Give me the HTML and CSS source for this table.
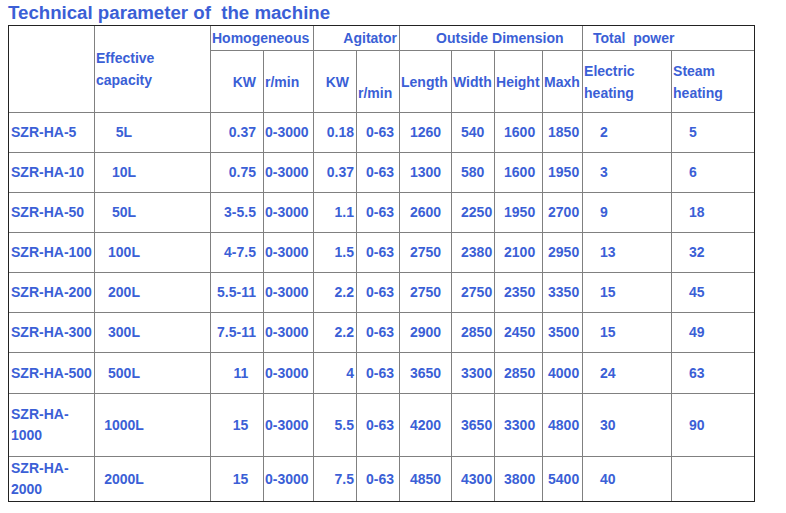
FILE: index.html
```html
<!DOCTYPE html>
<html>
<head>
<meta charset="utf-8">
<title>Technical parameter of the machine</title>
<link rel="stylesheet" href="styles.css">
</head>
<body>
<div class="title">Technical parameter of&nbsp; the machine</div>
<table class="spec">
  <colgroup>
    <col class="w1"><col class="w2"><col class="w3"><col class="w4"><col class="w5"><col class="w6">
    <col class="w7"><col class="w8"><col class="w9"><col class="w10"><col class="w11"><col class="w12">
  </colgroup>
  <tr class="h1">
    <td rowspan="2"></td>
    <td rowspan="2" class="hl">Effective capacity</td>
    <td colspan="2" class="hl">Homogeneous</td>
    <td colspan="2" class="hr">Agitator</td>
    <td colspan="4" class="hod">Outside Dimension</td>
    <td colspan="2" class="htp last">Total&nbsp; power</td>
  </tr>
  <tr class="h2">
    <td class="hkw">KW</td>
    <td class="hl">r/min</td>
    <td class="hkw">KW</td>
    <td class="hl"><br>r/min</td>
    <td class="hl">Length</td>
    <td class="hl">Width</td>
    <td class="hl">Height</td>
    <td class="hl">Maxh</td>
    <td class="hl">Electric heating</td>
    <td class="hl last">Steam heating</td>
  </tr>
  <tr class="r40"><td class="c1">SZR-HA-5</td><td class="c2">5L</td><td class="c3">0.37</td><td class="c4">0-3000</td><td class="c5">0.18</td><td class="c6">0-63</td><td class="c7">1260</td><td class="c8">540</td><td class="c9">1600</td><td class="c10">1850</td><td class="c11">2</td><td class="c12 last">5</td></tr>
  <tr class="r40"><td class="c1">SZR-HA-10</td><td class="c2">10L</td><td class="c3">0.75</td><td class="c4">0-3000</td><td class="c5">0.37</td><td class="c6">0-63</td><td class="c7">1300</td><td class="c8">580</td><td class="c9">1600</td><td class="c10">1950</td><td class="c11">3</td><td class="c12 last">6</td></tr>
  <tr class="r40"><td class="c1">SZR-HA-50</td><td class="c2">50L</td><td class="c3">3-5.5</td><td class="c4">0-3000</td><td class="c5">1.1</td><td class="c6">0-63</td><td class="c7">2600</td><td class="c8">2250</td><td class="c9">1950</td><td class="c10">2700</td><td class="c11">9</td><td class="c12 last">18</td></tr>
  <tr class="r40"><td class="c1">SZR-HA-100</td><td class="c2">100L</td><td class="c3">4-7.5</td><td class="c4">0-3000</td><td class="c5">1.5</td><td class="c6">0-63</td><td class="c7">2750</td><td class="c8">2380</td><td class="c9">2100</td><td class="c10">2950</td><td class="c11">13</td><td class="c12 last">32</td></tr>
  <tr class="r40"><td class="c1">SZR-HA-200</td><td class="c2">200L</td><td class="c3">5.5-11</td><td class="c4">0-3000</td><td class="c5">2.2</td><td class="c6">0-63</td><td class="c7">2750</td><td class="c8">2750</td><td class="c9">2350</td><td class="c10">3350</td><td class="c11">15</td><td class="c12 last">45</td></tr>
  <tr class="r40"><td class="c1">SZR-HA-300</td><td class="c2">300L</td><td class="c3">7.5-11</td><td class="c4">0-3000</td><td class="c5">2.2</td><td class="c6">0-63</td><td class="c7">2900</td><td class="c8">2850</td><td class="c9">2450</td><td class="c10">3500</td><td class="c11">15</td><td class="c12 last">49</td></tr>
  <tr class="r41"><td class="c1">SZR-HA-500</td><td class="c2">500L</td><td class="c3">11&nbsp;&nbsp;</td><td class="c4">0-3000</td><td class="c5">4</td><td class="c6">0-63</td><td class="c7">3650</td><td class="c8">3300</td><td class="c9">2850</td><td class="c10">4000</td><td class="c11">24</td><td class="c12 last">63</td></tr>
  <tr class="r63"><td class="c1">SZR-HA-1000</td><td class="c2">1000L</td><td class="c3">15&nbsp;&nbsp;</td><td class="c4">0-3000</td><td class="c5">5.5</td><td class="c6">0-63</td><td class="c7">4200</td><td class="c8">3650</td><td class="c9">3300</td><td class="c10">4800</td><td class="c11">30</td><td class="c12 last">90</td></tr>
  <tr class="r44 bottom"><td class="c1">SZR-HA-2000</td><td class="c2">2000L</td><td class="c3">15&nbsp;&nbsp;</td><td class="c4">0-3000</td><td class="c5">7.5</td><td class="c6">0-63</td><td class="c7">4850</td><td class="c8">4300</td><td class="c9">3800</td><td class="c10">5400</td><td class="c11">40</td><td class="c12 last"></td></tr>
</table>
</body>
</html>
```
FILE: styles.css
```css
html, body {
  margin: 0;
  padding: 0;
  background: #ffffff;
}
body {
  padding: 3px 8px 0 8px;
  font-family: "Liberation Sans", Arial, sans-serif;
  color: #3b5fd6;
}
.title {
  font-size: 18.67px;
  font-weight: bold;
  line-height: 20px;
  height: 22px;
  white-space: nowrap;
}
.spec {
  border-collapse: separate;
  border-spacing: 0;
  border: 1px solid #222222;
  table-layout: fixed;
  width: 747px;
  font-size: 14px;
  font-weight: bold;
}
.w1 { width: 86px; }
.w2 { width: 116px; }
.w3 { width: 53px; }
.w4 { width: 50px; }
.w5 { width: 43px; }
.w6 { width: 43px; }
.w7 { width: 52px; }
.w8 { width: 43px; }
.w9 { width: 48px; }
.w10 { width: 40px; }
.w11 { width: 89px; }
.w12 { width: 82px; }
.spec td {
  padding: 0;
  border-right: 1px solid #808080;
  border-bottom: 1px solid #808080;
  vertical-align: middle;
  line-height: 21px;
  white-space: normal;
  overflow: hidden;
}
.spec td.last { border-right: none; }
.spec tr.bottom td { border-bottom: none; }
.h1 { height: 25px; }
.h2 { height: 62px; }
.r40 { height: 40px; }
.r41 { height: 41px; }
.r63 { height: 63px; }
.r44 { height: 44px; }
.h1 td, .h2 td { line-height: 22px; }
.hl { text-align: left; padding-left: 1px !important; }
.hr { text-align: right; padding-right: 2px !important; }
.hkw { text-align: right; padding-right: 7px !important; }
.hod { text-align: left; padding-left: 36px !important; }
.htp { text-align: left; padding-left: 10px !important; }
.c1 { text-align: left; padding-left: 2px !important; }
.c2 { text-align: center; padding-right: 57px !important; }
.c3 { text-align: right; padding-right: 7px !important; white-space: nowrap !important; }
.c4 { text-align: left; padding-left: 1px !important; }
.c5 { text-align: right; padding-right: 2px !important; }
.c6 { text-align: left; padding-left: 9px !important; }
.c7 { text-align: center; }
.c8 { text-align: left; padding-left: 9px !important; }
.c9 { text-align: left; padding-left: 9px !important; }
.c10 { text-align: left; padding-left: 5px !important; }
.c11 { text-align: left; padding-left: 17px !important; }
.c12 { text-align: left; padding-left: 17px !important; }
```
